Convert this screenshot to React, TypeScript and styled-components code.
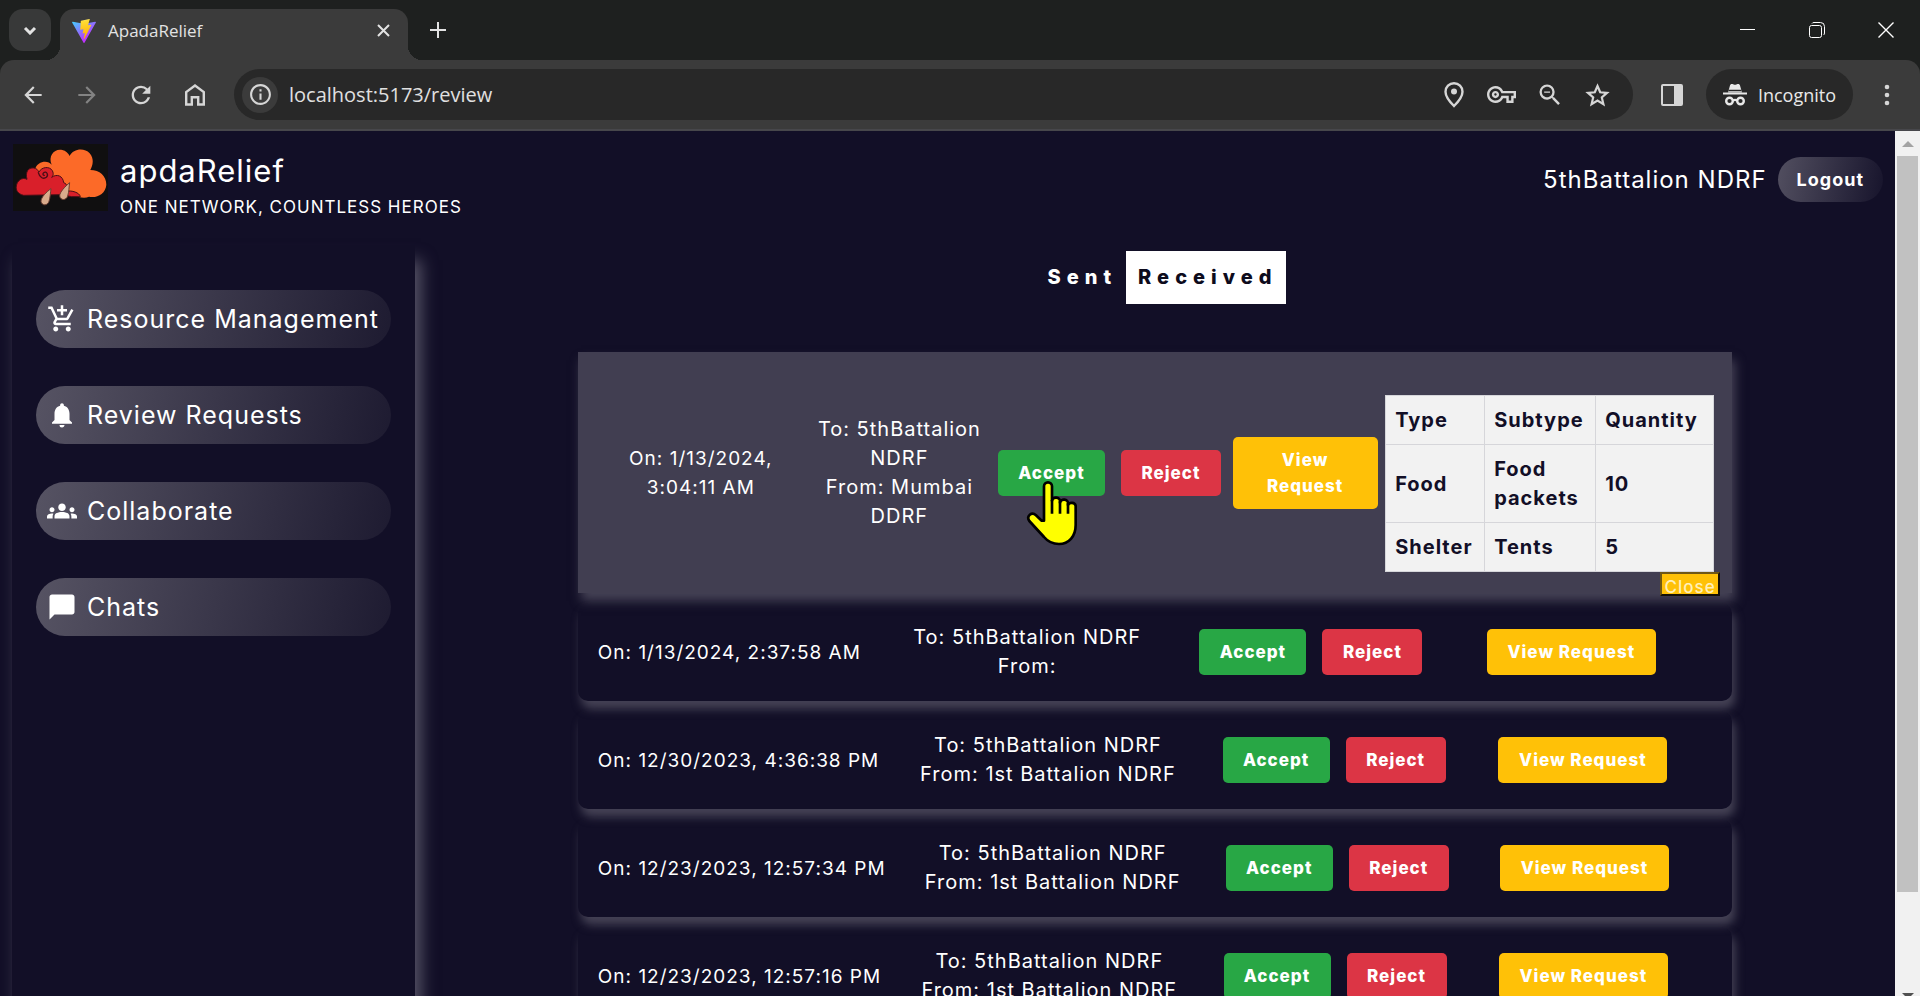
import React from "react";
import styled, { createGlobalStyle, css } from "styled-components";
import {
  MdAddShoppingCart,
  MdArrowBack,
  MdArrowForward,
  MdChatBubble,
  MdGroups,
  MdNotifications,
  MdOutlineHome,
  MdOutlinePlace,
  MdOutlineVpnKey,
  MdRefresh,
  MdStarBorder,
  MdZoomOut,
  MdInfoOutline,
} from "react-icons/md";

const GlobalStyle = createGlobalStyle`
  *, *::before, *::after { box-sizing: border-box; }
  body { margin: 0; background: #120f27; overflow: hidden; }
  button, input { font: inherit; color: inherit; letter-spacing: inherit; }
  button { border: 0; background: none; padding: 0; cursor: pointer; }
  a { color: inherit; text-decoration: none; }
`;

const uiFont = `"Open Sans", "Noto Sans", sans-serif`;
const pageFont = `Inter, "Open Sans", sans-serif`;

const BrowserWindow = styled.div`
  display: flex;
  flex-direction: column;
  height: 100vh;
  overflow: hidden;
`;

/* ---------- browser chrome ---------- */

const TabStrip = styled.header`
  display: flex;
  align-items: flex-end;
  flex: none;
  height: 60px;
  padding-left: 9px;
  background: #1e201f;
  color: #e3e3e3;
  font: 17px/24px ${uiFont};
`;

const TabSearch = styled.button`
  display: grid;
  place-items: center;
  width: 42px;
  height: 42px;
  margin: 0 9px 9px 0;
  border-radius: 14px;
  background: #383939;
`;

const Tab = styled.div`
  position: relative;
  display: flex;
  align-items: center;
  gap: 12px;
  width: 348px;
  height: 51px;
  padding: 0 18px 8px 12px;
  border-radius: 14px 14px 0 0;
  background: #3b3b3b;

  &::before,
  &::after {
    content: "";
    position: absolute;
    bottom: 0;
    width: 14px;
    height: 14px;
  }
  &::before {
    right: 100%;
    background: radial-gradient(circle at 0 0, transparent 14px, #3b3b3b 14px);
  }
  &::after {
    left: 100%;
    background: radial-gradient(circle at 100% 0, transparent 14px, #3b3b3b 14px);
  }
`;

const TabTitle = styled.span`
  flex: 1;
`;

const StripButton = styled.button`
  display: grid;
  place-items: center;
  width: 42px;
  height: 42px;
  margin: 0 0 9px 9px;
`;

const WindowControls = styled.div`
  display: flex;
  align-self: stretch;
  margin-left: auto;
`;

const WindowButton = styled.button`
  display: grid;
  place-items: center;
  width: 69px;
  height: 60px;
  color: #fff;
`;

const Toolbar = styled.nav`
  display: flex;
  align-items: center;
  flex: none;
  height: 71px;
  padding: 0 15px 0 9px;
  border-bottom: 2px solid #47474b;
  border-radius: 14px 14px 0 0;
  background: #3b3b3b;
  color: #d6d6d6;
  font: 18px/24px ${uiFont};
`;

const ChromeBack = styled.div`
  flex: none;
  background: #1e201f;
`;

const ToolButton = styled.button<{ $dim?: boolean }>`
  display: grid;
  place-items: center;
  flex: none;
  width: 48px;
  height: 48px;
  margin-right: 6px;
  color: ${(p) => (p.$dim ? "#838383" : "#d6d6d6")};
`;

const Omnibox = styled.div`
  display: flex;
  align-items: center;
  flex: 1;
  height: 51px;
  margin-left: 9px;
  padding: 0 11px 0 8px;
  border-radius: 26px;
  background: #282828;
`;

const SiteInfo = styled.button`
  display: grid;
  place-items: center;
  width: 36px;
  height: 36px;
  border-radius: 50%;
  background: #3b3b3b;
`;

const Address = styled.input`
  flex: 1;
  min-width: 0;
  margin-left: 11px;
  border: 0;
  outline: 0;
  padding: 0;
  background: none;
  color: #e0e0e0;
  font-size: 20px;
`;

const OmniboxButton = styled.button`
  display: grid;
  place-items: center;
  width: 48px;
  height: 48px;
`;

const PanelButton = styled(OmniboxButton)`
  margin: 0 10px 0 15px;
`;

const IncognitoChip = styled.button`
  display: flex;
  align-items: center;
  gap: 11px;
  height: 51px;
  padding: 0 17px;
  border-radius: 26px;
  background: #282828;
  color: #e8e8e8;
`;

const MenuButton = styled.button`
  display: grid;
  place-items: center;
  width: 36px;
  height: 48px;
  margin-left: 16px;
`;

/* ---------- page ---------- */

const Viewport = styled.div`
  display: flex;
  flex: 1;
  min-height: 0;
`;

const Page = styled.div`
  display: flex;
  flex-direction: column;
  flex: 1;
  min-width: 0;
  overflow: hidden;
  background: #120f27;
  color: #fff;
  font: 19px/29px ${pageFont};
  letter-spacing: 1px;
`;

const PageHeader = styled.header`
  display: flex;
  justify-content: space-between;
  flex: none;
  height: 114px;
  padding: 13px 12px 0 13px;
`;

const Brand = styled.a`
  display: flex;
  gap: 12px;
`;

const BrandName = styled.div`
  padding-top: 8px;
  font-size: 31px;
  line-height: 38px;
`;

const Tagline = styled.div`
  font-size: 17px;
  line-height: 34px;
`;

const Account = styled.div`
  display: flex;
  align-items: center;
  align-self: flex-start;
  gap: 11px;
  padding-top: 13px;
  font-size: 24px;
`;

const LogoutButton = styled.button`
  height: 45px;
  padding: 0 19px;
  border-radius: 23px;
  background: linear-gradient(100deg, #524f60, #17142c);
  font-size: 18px;
  font-weight: 700;
`;

const Body = styled.div`
  display: flex;
  flex: 1;
  min-height: 0;
`;

const Sidebar = styled.nav`
  display: flex;
  flex-direction: column;
  gap: 38px;
  flex: none;
  width: 403px;
  margin-left: 12px;
  padding: 45px 24px;
  box-shadow: 6px 15px 15px #575467;
  background: #120f27;
`;

const NavLink = styled.a`
  display: flex;
  align-items: center;
  gap: 10px;
  height: 58px;
  padding-left: 11px;
  border-radius: 29px;
  background: linear-gradient(100deg, #565363, #1e1b31);
  font-size: 25px;
  white-space: nowrap;

  svg { width: 30px; height: 30px; }
`;

const Main = styled.main`
  display: flex;
  flex-direction: column;
  align-items: center;
  flex: 1;
  min-width: 0;
  padding-top: 6px;
`;

const Switcher = styled.div`
  display: flex;
  flex: none;
  margin-bottom: 48px;
  padding-left: 12px;
`;

const SwitchButton = styled.button<{ $active?: boolean }>`
  height: 53px;
  padding: 0 9px 0 12px;
  background: ${(p) => (p.$active ? "#fff" : "transparent")};
  color: ${(p) => (p.$active ? "#0d0b1c" : "#fff")};
  font-size: 20px;
  font-weight: 800;
  letter-spacing: 6px;
`;

const RequestList = styled.div`
  display: flex;
  flex-direction: column;
  gap: 10px;
  width: 78%;
`;

const RequestCard = styled.article<{ $open?: boolean }>`
  display: flex;
  align-items: center;
  flex: none;
  height: 98px;
  padding: 0 24px 0 20px;
  justify-content: space-between;
  border-radius: 10px;
  box-shadow: 3px 8px 10px #454255;
  text-align: center;

  ${(p) =>
    p.$open &&
    css`
      height: 241px;
      padding: 0 18px 0 43px;
      border-radius: 0;
      background: #413e51;
    `}
`;

const SentOn = styled.div<{ $open?: boolean }>`
  flex: none;
  width: ${(p) => (p.$open ? "160px" : "auto")};
`;

const Parties = styled.div<{ $open?: boolean }>`
  flex: none;
  width: ${(p) => (p.$open ? "182px" : "auto")};
  margin: ${(p) => (p.$open ? "0 0 0 20px" : "0 6px 0 0")};
  font-size: 20px;
`;

const Decision = styled.div`
  position: relative;
  display: flex;
  gap: 16px;
`;

const tones = { accept: "#28a745", reject: "#dc3545", view: "#ffc107" };

const ActionButton = styled.button<{ $tone: keyof typeof tones; $open?: boolean }>`
  flex: none;
  width: ${(p) => (p.$tone === "accept" ? 107 : p.$tone === "reject" ? 100 : p.$open ? 145 : 169)}px;
  padding: 10px 16px;
  margin-left: ${(p) => (p.$tone !== "view" ? 0 : p.$open ? 4 : 12)}px;
  border-radius: 5px;
  background: ${(p) => tones[p.$tone]};
  font-size: 17px;
  line-height: 26px;
  font-weight: 800;
  white-space: ${(p) => (p.$open ? "normal" : "nowrap")};
`;

const Details = styled.div`
  position: relative;
  align-self: flex-start;
  margin-top: 43px;
`;

const ItemTable = styled.table`
  border-collapse: collapse;
  background: #f2f2f2;
  color: #120f27;
  font-size: 20px;
  text-align: left;

  th, td {
    border: 1px solid #d6d6da;
    padding: 10px 9px 9px;
    font-weight: 700;
  }
`;

const CloseButton = styled.button`
  position: absolute;
  top: 100%;
  right: -6px;
  width: 60px;
  height: 24px;
  overflow: hidden;
  border: 2px solid;
  border-color: #6f5716 #141008 #141008 #6f5716;
  background: #ffc107;
  color: #fff0b8;
  font-size: 17px;
  font-weight: 500;
  line-height: 26px;
`;

const Pointer = styled.svg`
  position: absolute;
  top: 30px;
  left: 27px;
  width: 55px;
  height: 68px;
  pointer-events: none;
`;

const Scrollbar = styled.div`
  display: flex;
  flex-direction: column;
  align-items: center;
  flex: none;
  width: 25px;
  background: #f1f1f1;
`;

const ScrollArrow = styled.div<{ $down?: boolean }>`
  flex: none;
  height: ${(p) => (p.$down ? 13 : 25)}px;
  padding-top: 10px;
  overflow: hidden;

  &::after {
    content: "";
    display: block;
    border: 6px solid transparent;
    border-top: ${(p) => (p.$down ? "6px solid #505050" : "0")};
    border-bottom: ${(p) => (p.$down ? "0" : "6px solid #a3a3a3")};
  }
`;

const ScrollTrack = styled.div`
  flex: 1;
`;

const ScrollThumb = styled.div`
  width: 21px;
  height: 89%;
  background: #c1c1c1;
`;

const Line = styled.svg`
  fill: none;
  stroke: currentColor;
`;

function ViteMark() {
  return (
    <svg width="24" height="24" viewBox="0 0 256 257" aria-hidden="true">
      <defs>
        <linearGradient id="shield" x1="0" y1="0" x2=".6" y2=".8">
          <stop offset="0" stopColor="#41d1ff" />
          <stop offset="1" stopColor="#bd34fe" />
        </linearGradient>
        <linearGradient id="bolt" x1=".4" y1="0" x2=".5" y2="1">
          <stop offset="0" stopColor="#ffea83" />
          <stop offset=".1" stopColor="#ffdd35" />
          <stop offset="1" stopColor="#ffa800" />
        </linearGradient>
      </defs>
      <path fill="url(#shield)" d="M255.153 37.938L134.897 252.976c-2.483 4.44-8.862 4.466-11.382.048L.875 37.958c-2.746-4.814 1.371-10.646 6.827-9.67l120.385 21.517a6.537 6.537 0 0 0 2.322-.004l117.867-21.483c5.438-.991 9.574 4.796 6.877 9.62Z" />
      <path fill="url(#bolt)" d="M185.432.063L96.44 17.501a3.268 3.268 0 0 0-2.634 3.014l-5.474 92.456a3.268 3.268 0 0 0 3.997 3.378l24.777-5.718c2.318-.535 4.413 1.507 3.936 3.838l-7.361 36.047c-.495 2.426 1.782 4.5 4.151 3.78l15.304-4.649c2.372-.72 4.652 1.36 4.15 3.788l-11.698 56.621c-.732 3.542 3.979 5.473 5.943 2.437l1.313-2.028l72.516-144.72c1.215-2.423-.88-5.186-3.54-4.672l-25.505 4.922c-2.396.462-4.435-1.77-3.759-4.114l16.646-57.705c.677-2.35-1.37-4.583-3.769-4.113Z" />
    </svg>
  );
}

function CloudLogo() {
  return (
    <svg width="95" height="67" viewBox="0 0 285 201" aria-hidden="true">
      <rect width="285" height="201" fill="#100f10" />
      <path
        fill="#fc6a28"
        d="M66 76 C72 52 104 46 116 62 C104 34 126 12 148 18 C158 20 166 28 170 36 C180 14 214 10 230 28 C244 44 240 64 232 78 C260 78 280 96 280 122 C278 150 250 164 228 158 C214 164 196 160 184 152 L120 120 Z"
      />
      <path
        fill="#d91f2a"
        stroke="#4a0e16"
        strokeWidth="3"
        d="M32 154 C14 150 8 138 10 126 C12 110 28 98 42 106 C36 84 46 70 62 72 C70 72 74 78 78 84 C86 68 110 66 118 80 C124 92 118 98 116 100 C132 88 150 96 152 116 C164 120 166 134 160 142 C176 138 200 146 202 158 L176 158 L146 152 Z"
      />
      <path
        fill="none"
        stroke="#4a0e16"
        strokeWidth="4"
        strokeLinecap="round"
        d="M76 86 C80 102 92 106 100 100 C108 92 100 80 92 86 C88 90 90 94 94 94"
      />
      <path fill="#d9ab8c" stroke="#6b3d30" strokeWidth="3" d="M114 134 C100 144 84 160 84 172 C86 186 104 186 108 172 C112 160 112 146 114 134 Z" />
      <path fill="#d9ab8c" stroke="#6b3d30" strokeWidth="3" d="M170 116 C156 128 140 144 140 156 C142 170 160 170 164 156 C168 144 168 128 170 116 Z" />
    </svg>
  );
}

function HandPointer() {
  return (
    <Pointer viewBox="0 0 165 204" aria-hidden="true">
      <path
        fill="#ffff00"
        stroke="#000"
        strokeWidth="8"
        strokeLinejoin="round"
        d="M57 122 V19 A12 12 0 0 1 81 19 V62 A12 10 0 0 1 105 64 V68 A12 10 0 0 1 129 70 V75 A12 10 0 0 1 152 77 V135 C152 170 131 192 102 192 C82 192 67 183 57 171 L13 123 C3 108 20 94 33 106 L50 122 Z"
      />
      <path stroke="#000" strokeWidth="8" d="M81 60 V101 M105 64 V101 M129 70 V101" />
    </Pointer>
  );
}

const navItems = [
  { label: "Resource Management", Icon: MdAddShoppingCart },
  { label: "Review Requests", Icon: MdNotifications },
  { label: "Collaborate", Icon: MdGroups },
  { label: "Chats", Icon: MdChatBubble },
];

const requests = [
  { on: "1/13/2024, 3:04:11 AM", from: "Mumbai DDRF", open: true },
  { on: "1/13/2024, 2:37:58 AM", from: "" },
  { on: "12/30/2023, 4:36:38 PM", from: "1st Battalion NDRF" },
  { on: "12/23/2023, 12:57:34 PM", from: "1st Battalion NDRF" },
  { on: "12/23/2023, 12:57:16 PM", from: "1st Battalion NDRF" },
];

const items = [
  ["Food", "Food packets", "10"],
  ["Shelter", "Tents", "5"],
];

const Column = styled.col<{ $width: number }>`
  width: ${(p) => p.$width}px;
`;

function RequestDetails() {
  return (
    <Details>
      <ItemTable>
        <colgroup>
          <Column $width={99} />
          <Column $width={111} />
          <Column $width={118} />
        </colgroup>
        <thead>
          <tr>
            <th>Type</th>
            <th>Subtype</th>
            <th>Quantity</th>
          </tr>
        </thead>
        <tbody>
          {items.map(([type, subtype, quantity]) => (
            <tr key={type}>
              <td>{type}</td>
              <td>{subtype}</td>
              <td>{quantity}</td>
            </tr>
          ))}
        </tbody>
      </ItemTable>
      <CloseButton>Close</CloseButton>
    </Details>
  );
}

export default function App() {
  return (
    <BrowserWindow>
      <GlobalStyle />
      <TabStrip>
        <TabSearch aria-label="Search tabs">
          <Line width="14" height="9" viewBox="0 0 14 9" strokeWidth="3">
            <path d="M2 2l5 5 5-5" />
          </Line>
        </TabSearch>
        <Tab>
          <ViteMark />
          <TabTitle>ApadaRelief</TabTitle>
          <button aria-label="Close tab">
            <Line width="13" height="13" viewBox="0 0 13 13" strokeWidth="2" display="block">
              <path d="M1 1l11 11M12 1L1 12" />
            </Line>
          </button>
        </Tab>
        <StripButton aria-label="New tab">
          <Line width="16" height="16" viewBox="0 0 16 16" strokeWidth="2">
            <path d="M8 0v16M0 8h16" />
          </Line>
        </StripButton>
        <WindowControls>
          <WindowButton aria-label="Minimize">
            <Line width="15" height="15" viewBox="0 0 15 15">
              <path d="M0 6.500h15" />
            </Line>
          </WindowButton>
          <WindowButton aria-label="Restore">
            <Line width="16" height="16" viewBox="0 0 16 16">
              <rect x=".5" y="3.500" width="12" height="12" rx="2" />
              <path d="M3 1.500c.4-.7 1-1 2-1h6.500a4 4 0 0 1 4 4V11c0 1-.3 1.600-1 2" />
            </Line>
          </WindowButton>
          <WindowButton aria-label="Close">
            <Line width="16" height="16" viewBox="0 0 16 16" strokeWidth="1.400">
              <path d="M.5.5l15 15M15.500.5l-15 15" />
            </Line>
          </WindowButton>
        </WindowControls>
      </TabStrip>
      <ChromeBack>
        <Toolbar>
          <ToolButton aria-label="Back"><MdArrowBack size={26} /></ToolButton>
          <ToolButton aria-label="Forward" $dim><MdArrowForward size={26} /></ToolButton>
          <ToolButton aria-label="Reload"><MdRefresh size={28} /></ToolButton>
          <ToolButton aria-label="Home">
            <Line width="20" height="22" viewBox="0 0 20 22" strokeWidth="2.400">
              <path d="M1.200 20.500V8L10 1.500 18.800 8v12.500h-5.600v-7.300H6.800v7.300z" />
            </Line>
          </ToolButton>
          <Omnibox>
            <SiteInfo aria-label="Site information"><MdInfoOutline size={25} /></SiteInfo>
            <Address aria-label="Address" defaultValue="localhost:5173/review" />
            <OmniboxButton aria-label="Location">
              <Line width="20" height="26" viewBox="0 0 20 26" strokeWidth="2.400">
                <path d="M10 24C4.500 18.500 1.500 13.500 1.500 9.700a8.500 8.500 0 0 1 17 0c0 3.800-3 8.800-8.500 14.300z" />
                <circle cx="10" cy="9.500" r="3" fill="currentColor" stroke="none" />
              </Line>
            </OmniboxButton>
            <OmniboxButton aria-label="Passwords"><MdOutlineVpnKey size={29} /></OmniboxButton>
            <OmniboxButton aria-label="Zoom"><MdZoomOut size={28} /></OmniboxButton>
            <OmniboxButton aria-label="Bookmark">
              <Line width="25" height="24" viewBox="0 0 25 24" strokeWidth="2.200">
                <path d="M12.500 3l2.700 6.300 6.800.6-5.200 4.500 1.600 6.700-5.900-3.600-5.900 3.600 1.600-6.700L3 9.900l6.800-.6z" />
              </Line>
            </OmniboxButton>
          </Omnibox>
          <PanelButton aria-label="Side panel">
            <svg width="22" height="22" viewBox="0 0 22 22">
              <rect x="1" y="1" width="20" height="20" rx="1" fill="none" stroke="currentColor" strokeWidth="2" />
              <path d="M13 1h8v20h-8z" fill="currentColor" />
            </svg>
          </PanelButton>
          <IncognitoChip>
            <svg width="24" height="24" viewBox="0 0 24 24" aria-hidden="true">
              <path fill="currentColor" d="M5 9.500l2-7C7.300 1.200 8.400.7 9.500 1.100l1.800.6h1.400l1.800-.6c1.100-.4 2.200.1 2.500 1.400l2 7z" />
              <path fill="currentColor" d="M0 9.500h24v2H0z" />
              <g fill="none" stroke="currentColor" strokeWidth="2.400">
                <circle cx="6.500" cy="18" r="3.300" />
                <circle cx="17.500" cy="18" r="3.300" />
                <path d="M9.800 17.500c1.400-.8 3-.8 4.400 0" />
              </g>
              <path stroke="#282828" strokeWidth="1.500" d="M5.500 7.500h13" />
            </svg>
            Incognito
          </IncognitoChip>
          <MenuButton aria-label="Menu">
            <svg width="6" height="22" viewBox="0 0 6 22" fill="currentColor">
              <circle cx="3" cy="3" r="2.300" />
              <circle cx="3" cy="11" r="2.300" />
              <circle cx="3" cy="19" r="2.300" />
            </svg>
          </MenuButton>
        </Toolbar>
      </ChromeBack>
      <Viewport>
        <Page>
          <PageHeader>
            <Brand href="#">
              <CloudLogo />
              <div>
                <BrandName>apdaRelief</BrandName>
                <Tagline>ONE NETWORK, COUNTLESS HEROES</Tagline>
              </div>
            </Brand>
            <Account>
              5thBattalion NDRF
              <LogoutButton>Logout</LogoutButton>
            </Account>
          </PageHeader>
          <Body>
            <Sidebar>
              {navItems.map(({ label, Icon }) => (
                <NavLink href="#" key={label}>
                  <Icon />
                  {label}
                </NavLink>
              ))}
            </Sidebar>
            <Main>
              <Switcher>
                <SwitchButton>Sent</SwitchButton>
                <SwitchButton $active>Received</SwitchButton>
              </Switcher>
              <RequestList>
                {requests.map(({ on, from, open }) => (
                  <RequestCard key={on} $open={open}>
                    <SentOn $open={open}>On: {on}</SentOn>
                    <Parties $open={open}>
                      <div>To: 5thBattalion NDRF</div>
                      <div>From: {from}</div>
                    </Parties>
                    <Decision>
                      <ActionButton $tone="accept">Accept</ActionButton>
                      <ActionButton $tone="reject">Reject</ActionButton>
                      {open && <HandPointer />}
                    </Decision>
                    <ActionButton $tone="view" $open={open}>View Request</ActionButton>
                    {open ? <RequestDetails /> : <span />}
                  </RequestCard>
                ))}
              </RequestList>
            </Main>
          </Body>
        </Page>
        <Scrollbar aria-hidden="true">
          <ScrollArrow />
          <ScrollTrack>
            <ScrollThumb />
          </ScrollTrack>
          <ScrollArrow $down />
        </Scrollbar>
      </Viewport>
    </BrowserWindow>
  );
}
